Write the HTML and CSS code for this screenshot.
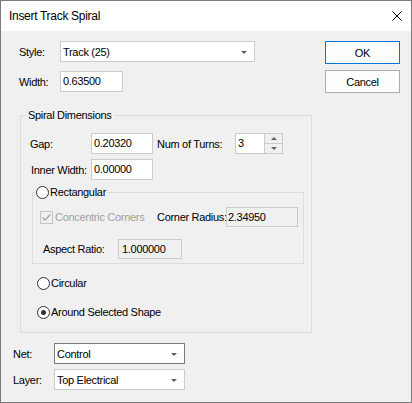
FILE: index.html
```html
<!DOCTYPE html>
<html>
<head>
<title>Insert Track Spiral</title>
<meta charset="UTF-8">
<link rel="stylesheet" href="styles.css">
</head>
<body>
  <div class="window">
    <div class="titlebar">
      <span class="title">Insert Track Spiral</span>
      <svg class="close" width="10" height="10" viewBox="0 0 10 10">
        <path d="M0.5 0.5 L9.5 9.5 M9.5 0.5 L0.5 9.5" stroke="#000" stroke-width="1" fill="none"/>
      </svg>
    </div>

    <div class="content">
      <div class="top">
        <div class="form-grid">
          <span class="lbl">Style:</span>
          <div class="combo combo-style"><span>Track (25)</span><span class="arrow"></span></div>
          <span class="lbl">Width:</span>
          <div class="edit edit-width">0.63500</div>
        </div>
        <div class="buttons">
          <button class="btn btn-default">OK</button>
          <button class="btn">Cancel</button>
        </div>
      </div>

      <fieldset class="group group-spiral">
        <legend class="group-title">Spiral Dimensions</legend>
        <div class="dims">
          <span class="lbl">Gap:</span>
          <div class="edit">0.20320</div>
          <span class="lbl lbl-turns">Num of Turns:</span>
          <div class="spin">
            <div class="spin-text">3</div>
            <div class="spin-btns">
              <span class="spin-up"></span>
              <span class="spin-down"></span>
            </div>
          </div>
          <span class="lbl lbl-inner">Inner Width:</span>
          <div class="edit">0.00000</div>
        </div>

        <fieldset class="group group-rect">
          <legend class="rect-title"><span class="radio"></span>Rectangular</legend>
          <div class="rect-row">
            <span class="check-item"><span class="checkbox">
              <svg width="11" height="11" viewBox="0 0 11 11"><path d="M1.5 5.5 L4 8 L9.5 2.5" stroke="#a8a8a8" stroke-width="1.3" fill="none"/></svg>
            </span><span class="disabled">Concentric Corners</span></span>
            <span class="lbl lbl-radius">Corner Radius:</span>
            <div class="edit edit-ro edit-radius">2.34950</div>
          </div>
          <div class="rect-row rect-row2">
            <span class="lbl lbl-aspect">Aspect Ratio:</span>
            <div class="edit edit-ro edit-aspect">1.000000</div>
          </div>
        </fieldset>

        <div class="option option-circ"><span class="radio"></span>Circular</div>
        <div class="option option-shape"><span class="radio checked"></span>Around Selected Shape</div>
      </fieldset>

      <div class="bottom-grid">
        <span class="lbl">Net:</span>
        <div class="combo combo-hover"><span>Control</span><span class="arrow"></span></div>
        <span class="lbl">Layer:</span>
        <div class="combo"><span>Top Electrical</span><span class="arrow"></span></div>
      </div>
    </div>
  </div>
</body>
</html>
```

FILE: styles.css
```css
body {
  margin: 0;
  font-family: 'Liberation Sans', Arial, sans-serif;
  font-size: 11px;
  line-height: 14px;
  letter-spacing: -0.3px;
  color: #000;
}
.window {
  width: 412px;
  height: 403px;
  box-sizing: border-box;
  border: 1px solid #7a7a7a;
  background-color: #f0f0f0;
  overflow: hidden;
}
.titlebar {
  height: 30px;
  background-color: #fff;
  display: flex;
  justify-content: space-between;
  align-items: center;
  padding: 0 9px 0 8px;
}
.title {
  font-size: 12px;
}
.close {
  margin-top: -1px;
}
.content {
  padding-top: 10px;
}
.lbl {
  white-space: nowrap;
}

/* Style / Width + buttons */
.top {
  display: flex;
  justify-content: space-between;
  padding: 0 11px 0 18px;
}
.form-grid {
  display: grid;
  grid-template-columns: 41px 195px;
  grid-auto-rows: 21px;
  row-gap: 9px;
  align-items: center;
}
.buttons {
  display: flex;
  flex-direction: column;
  gap: 6px;
}
.btn {
  width: 75px;
  height: 23px;
  border: 1px solid #adadad;
  background-color: #fdfdfd;
  font-family: inherit;
  font-size: 11px;
  letter-spacing: inherit;
  padding: 0;
  color: #000;
}
.btn-default {
  border-color: #0078d7;
}

/* Edit boxes and combos */
.edit {
  height: 21px;
  box-sizing: border-box;
  border: 1px solid #cccccc;
  background-color: #fff;
  padding-left: 2px;
  line-height: 19px;
}
.edit-width {
  width: 63px;
}
.edit-ro {
  height: 20px;
  line-height: 18px;
  background-color: #f0f0f0;
}
.combo {
  height: 21px;
  box-sizing: border-box;
  border: 1px solid #cccccc;
  background-color: #fff;
  padding: 0 7px 0 2px;
  display: flex;
  justify-content: space-between;
  align-items: center;
}
.combo-hover {
  border-color: #7a7a7a;
}
.arrow {
  width: 0;
  height: 0;
  border-left: 3px solid transparent;
  border-right: 3px solid transparent;
  border-top: 3px solid #606060;
  margin-top: 1px;
}

/* Group boxes */
.group {
  margin: 0;
  border: 1px solid #dcdcdc;
  box-sizing: border-box;
  min-width: 0;
}
.group-spiral {
  width: 292px;
  margin: 15px 0 0 19px;
  padding: 11px 7px 13px 9px;
}
.group-title {
  padding: 0 2px;
  margin-left: -4px;
  line-height: 14px;
}
.dims {
  display: grid;
  grid-template-columns: 61px 62px 82px 48px;
  grid-auto-rows: 21px;
  row-gap: 5px;
  align-items: center;
}
.lbl-turns {
  padding-left: 4px;
}
.lbl-inner {
  padding-left: 1px;
}
.spin {
  display: flex;
  height: 21px;
  box-sizing: border-box;
  border: 1px solid #cccccc;
  background-color: #fff;
}
.spin-text {
  flex: 1;
  padding-left: 2px;
  line-height: 19px;
}
.spin-btns {
  width: 17px;
  border-left: 1px solid #cccccc;
  background-color: #f0f0f0;
  display: flex;
  flex-direction: column;
}
.spin-up,
.spin-down {
  flex: 1;
  display: flex;
  justify-content: center;
  align-items: center;
}
.spin-up {
  border-bottom: 1px solid #cccccc;
}
.spin-up::after,
.spin-down::after {
  content: '';
  border-left: 3px solid transparent;
  border-right: 3px solid transparent;
}
.spin-up::after {
  border-bottom: 3px solid #606060;
}
.spin-down::after {
  border-top: 3px solid #606060;
}

.group-rect {
  width: 272px;
  margin: 5px 0 0 2px;
  padding: 8px 6px 4px 7px;
}
.rect-title {
  padding: 0 2px 0 0;
  margin-left: -4px;
  line-height: 14px;
  display: flex;
  align-items: center;
}
.rect-row {
  display: flex;
  align-items: center;
  height: 20px;
}
.rect-row2 {
  margin-top: 12px;
}
.check-item {
  width: 117px;
  flex-shrink: 0;
  display: flex;
  align-items: center;
  white-space: nowrap;
}
.checkbox {
  width: 13px;
  height: 13px;
  box-sizing: border-box;
  border: 1px solid #c4c4c4;
  background-color: #f0f0f0;
  margin-right: 2px;
  display: flex;
  align-items: center;
  justify-content: center;
}
.disabled {
  color: #a0a0a0;
}
.lbl-radius {
  width: 69px;
  flex-shrink: 0;
}
.edit-radius {
  width: 72px;
  flex-shrink: 0;
  padding-left: 1px;
}
.lbl-aspect {
  width: 75px;
  margin-left: 3px;
}
.edit-aspect {
  width: 64px;
  padding-left: 3px;
}

/* Radio buttons */
.radio {
  width: 13px;
  height: 13px;
  box-sizing: border-box;
  border: 1px solid #333;
  border-radius: 50%;
  background-color: #fff;
  margin-right: 1px;
  display: inline-flex;
  align-items: center;
  justify-content: center;
  flex-shrink: 0;
}
.radio.checked::after {
  content: '';
  width: 5px;
  height: 5px;
  border-radius: 50%;
  background-color: #333;
}
.option {
  display: flex;
  align-items: center;
  height: 14px;
  margin-left: 7px;
}
.option-circ {
  margin-top: 12px;
}
.option-shape {
  margin-top: 15px;
}

/* Net / Layer */
.bottom-grid {
  display: grid;
  grid-template-columns: 41px 131px;
  grid-auto-rows: 21px;
  row-gap: 5px;
  align-items: center;
  margin-top: 10px;
  padding-left: 12px;
}
```
